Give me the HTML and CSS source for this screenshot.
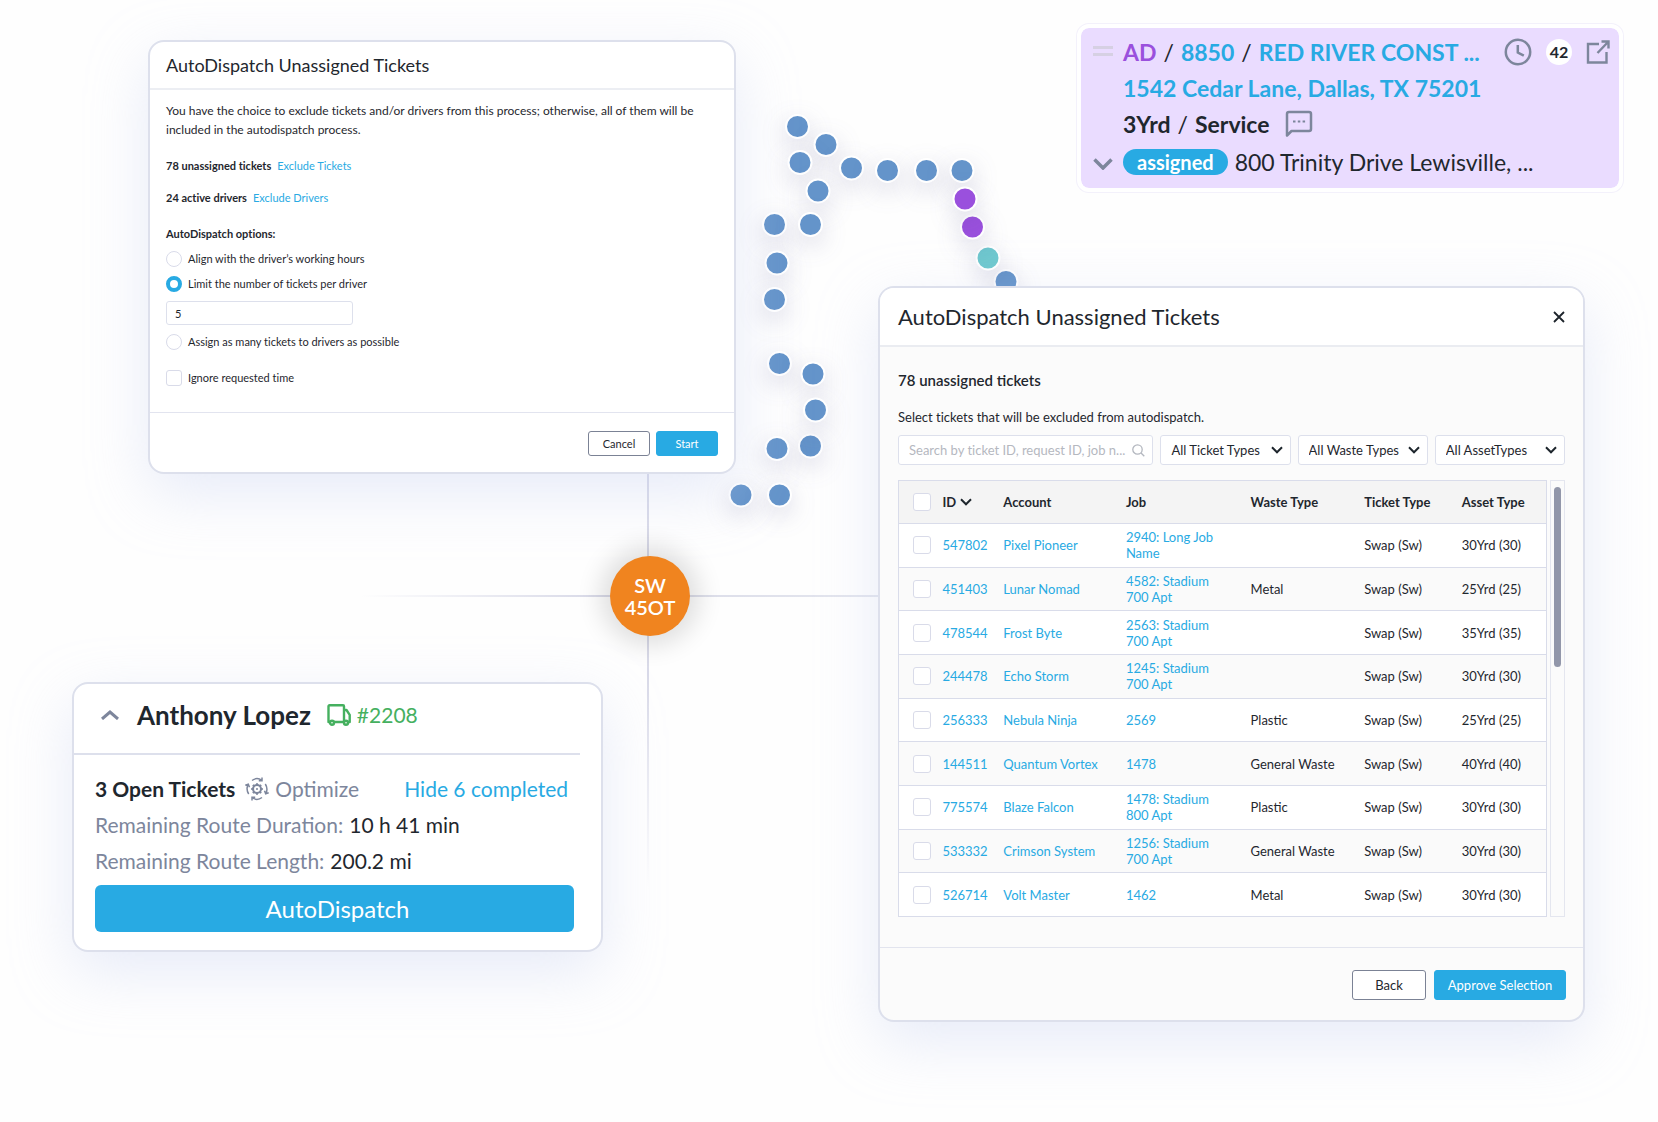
FILE: index.html
```html
<!DOCTYPE html>
<html lang="en">
<head>
<meta charset="utf-8">
<meta name="viewport" content="width=device-width, initial-scale=1">
<title>AutoDispatch</title>
<link rel="stylesheet" href="styles.css">
</head>
<body>
<main class="stage">

  <svg class="map" viewBox="0 0 1658 1122" width="1658" height="1122" aria-hidden="true">
    <defs>
      <linearGradient id="fade-x" gradientUnits="userSpaceOnUse" x1="360" y1="0" x2="878" y2="0">
        <stop offset="0" stop-color="#d9dae8" stop-opacity="0"/>
        <stop offset=".45" stop-color="#d9dae8"/>
        <stop offset="1" stop-color="#e4e6ee"/>
      </linearGradient>
      <linearGradient id="fade-y" gradientUnits="userSpaceOnUse" x1="0" y1="474" x2="0" y2="890">
        <stop offset="0" stop-color="#d9dae8"/>
        <stop offset=".5" stop-color="#d9dae8"/>
        <stop offset="1" stop-color="#d9dae8" stop-opacity="0"/>
      </linearGradient>
    </defs>
    <rect x="360" y="595" width="520" height="2" fill="url(#fade-x)"/>
    <rect x="647" y="460" width="2" height="430" fill="url(#fade-y)"/>
    <g class="stops">
      <circle cx="797.5" cy="126.5" r="11.5"/>
      <circle cx="826" cy="144.5" r="11.5"/>
      <circle cx="800" cy="162.5" r="11.5"/>
      <circle cx="851.5" cy="168" r="11.5"/>
      <circle cx="887.5" cy="170.5" r="11.5"/>
      <circle cx="926.5" cy="170.5" r="11.5"/>
      <circle cx="962" cy="170.5" r="11.5"/>
      <circle cx="818" cy="191" r="11.5"/>
      <circle cx="774.5" cy="224.5" r="11.5"/>
      <circle cx="810.5" cy="224.5" r="11.5"/>
      <circle cx="777" cy="263" r="11.5"/>
      <circle cx="774.5" cy="299.5" r="11.5"/>
      <circle cx="779.5" cy="363.5" r="11.5"/>
      <circle cx="813" cy="374" r="11.5"/>
      <circle cx="810.5" cy="446" r="11.5"/>
      <circle cx="815.5" cy="410" r="11.5"/>
      <circle cx="777" cy="448.5" r="11.5"/>
      <circle cx="741" cy="495" r="11.5"/>
      <circle cx="779.5" cy="495" r="11.5"/>
      <circle cx="1006" cy="281.5" r="11.5"/>
      <circle class="stop-teal" cx="988" cy="258" r="11.5"/>
      <circle class="stop-purple" cx="972.5" cy="227" r="11.5"/>
      <circle class="stop-purple" cx="965" cy="199" r="11.5"/>
    </g>
  </svg>

  <div class="hub"><span>SW</span><span>45OT</span></div>

  <div class="column column-left">

    <form class="card options">
      <header class="options-head"><h2>AutoDispatch Unassigned Tickets</h2></header>
      <div class="options-body">
        <p class="intro">You have the choice to exclude tickets and/or drivers from this process; otherwise, all of them will be included in the autodispatch process.</p>
        <p class="summary"><strong>78 unassigned tickets</strong><a href="#exclude-tickets">Exclude Tickets</a></p>
        <p class="summary"><strong>24 active drivers</strong><a href="#exclude-drivers">Exclude Drivers</a></p>
        <fieldset class="choices">
          <legend>AutoDispatch options:</legend>
          <label class="choice"><input type="radio" name="mode">Align with the driver’s working hours</label>
          <label class="choice"><input type="radio" name="mode" checked>Limit the number of tickets per driver</label>
          <input class="limit" type="text" value="5" aria-label="Tickets per driver">
          <label class="choice"><input type="radio" name="mode">Assign as many tickets to drivers as possible</label>
        </fieldset>
        <label class="choice choice-last"><input type="checkbox">Ignore requested time</label>
      </div>
      <footer class="options-foot">
        <button class="btn btn-small" type="button">Cancel</button>
        <button class="btn btn-small btn-primary" type="button">Start</button>
      </footer>
    </form>

    <section class="card driver">
      <header class="driver-head">
        <svg width="18" height="10" viewBox="0 0 18 10" fill="none" stroke="#7d869c" stroke-width="3"><path d="M1 9l8-7 8 7"/></svg>
        <h2>Anthony Lopez</h2>
        <span class="truck">
          <svg width="24" height="22" viewBox="0 0 24 22" fill="none" stroke="#45b05f" stroke-width="2.4" stroke-linejoin="round"><path d="M3 18H1.500V2.200a1 1 0 0 1 1-1H16a1 1 0 0 1 1 1V18H7M17 6h2.500l3.200 4.800V18h-1.200"/><circle cx="5" cy="18.800" r="2"/><circle cx="19" cy="18.800" r="2"/></svg>
          #2208
        </span>
      </header>
      <div class="driver-body">
        <div class="driver-row">
          <strong>3 Open Tickets</strong>
          <button class="optimize" type="button">
            <svg width="24" height="24" viewBox="0 0 24 24" fill="none" stroke="#7d869c"><circle cx="12" cy="12" r="4" stroke-width="2"/><circle cx="12" cy="12" r="1" fill="#7d869c" stroke="none"/><path stroke-width="2" d="M12 6.200v2M12 15.800v2M6.200 12h2M15.800 12h2M7.900 7.900l1.400 1.400M14.700 14.700l1.400 1.400M7.900 16.100l1.400-1.400M14.700 9.300l1.400-1.400"/><path stroke-width="1.500" d="M7 3.500C10 1.200 14 1.200 17 3.500M17 .5v3.200h-3.200M17 20.500c-3 2.300-7 2.300-10 0M7 23.500v-3.200h3.200M3.700 17C1.800 14 1.600 10.500 3.200 7.500M.3 8.200l3-1 1.200 3M20.300 7c1.900 3 2.100 6.500.5 9.500M23.700 15.800l-3 1-1.200-3"/></svg>
            Optimize
          </button>
          <a class="hide-link" href="#completed">Hide 6 completed</a>
        </div>
        <p class="driver-row metric">Remaining Route Duration: <b>10 h 41 min</b></p>
        <p class="driver-row metric">Remaining Route Length: <b>200.2 mi</b></p>
        <button class="dispatch" type="button">AutoDispatch</button>
      </div>
    </section>
  </div>

  <div class="column column-right">

    <article class="ticket">
      <div class="ticket-side">
        <span class="handle"></span>
        <svg width="20" height="12" viewBox="0 0 20 12" fill="none" stroke="#7d869c" stroke-width="3.500"><path d="M1.500 1.500L10 10l8.500-8.500"/></svg>
      </div>
      <div class="ticket-main">
        <div class="ticket-row"><b class="ad">AD</b><span>/</span><a href="#8850">8850</a><span>/</span><a href="#account">RED RIVER CONST ...</a>
          <span class="ticket-tools">
            <svg width="28" height="28" viewBox="0 0 28 28" fill="none" stroke="#7d869c" stroke-width="2.500"><circle cx="14" cy="14" r="12.200"/><path d="M13.800 7v7.500l6 3.200"/></svg>
            <span class="count">42</span>
            <svg width="24" height="24" viewBox="0 0 24 24" fill="none" stroke="#7d869c" stroke-width="2.400"><path d="M13 4H2v18.500h18.500V12M15.500 1.500h7v7M22.500 1.500L11.500 13"/></svg>
          </span>
        </div>
        <div class="ticket-row"><a href="#address">1542 Cedar Lane, Dallas, TX 75201</a></div>
        <div class="ticket-row"><b>3Yrd</b><span>/</span><b>Service</b>
          <svg class="chat" width="28" height="28" viewBox="0 0 28 28" fill="none" stroke="#7d869c" stroke-width="2.500" stroke-linejoin="round"><path d="M2 25.500V4a2 2 0 0 1 2-2h20a2 2 0 0 1 2 2v15a2 2 0 0 1-2 2H6.500z"/><path d="M8 11.500h2.500M12.800 11.500h2.500M17.600 11.500h2.500" stroke-width="2"/></svg>
        </div>
        <div class="ticket-row ticket-status"><span class="pill">assigned</span><span>800 Trinity Drive Lewisville, ...</span></div>
      </div>
    </article>

    <section class="card modal">
      <header class="modal-head">
        <h2>AutoDispatch Unassigned Tickets</h2>
        <button class="close" type="button" aria-label="Close"><svg width="12" height="12" viewBox="0 0 12 12" fill="none" stroke="#1d242b" stroke-width="1.800"><path d="M1 1l10 10M11 1L1 11"/></svg></button>
      </header>
      <div class="modal-body">
        <h3>78 unassigned tickets</h3>
        <p class="hint">Select tickets that will be excluded from autodispatch.</p>
        <div class="filters">
          <label class="field field-search">
            <input type="search" placeholder="Search by ticket ID, request ID, job n..." aria-label="Search tickets">
            <svg width="13" height="13" viewBox="0 0 13 13" fill="none" stroke="#b3b7bf" stroke-width="1.300"><circle cx="5.500" cy="5.500" r="4.700"/><path d="M9 9l3.300 3.300"/></svg>
          </label>
          <label class="field"><select aria-label="Ticket type"><option>All Ticket Types</option></select><svg class="caret" width="12" height="8" viewBox="0 0 12 8"><path d="M1 1.300l5 5 5-5"/></svg></label>
          <label class="field"><select aria-label="Waste type"><option>All Waste Types</option></select><svg class="caret" width="12" height="8" viewBox="0 0 12 8"><path d="M1 1.300l5 5 5-5"/></svg></label>
          <label class="field"><select aria-label="Asset type"><option>All AssetTypes</option></select><svg class="caret" width="12" height="8" viewBox="0 0 12 8"><path d="M1 1.300l5 5 5-5"/></svg></label>
        </div>
        <div class="table-wrap">
          <table class="tickets">
            <colgroup><col class="c-check"><col class="c-id"><col class="c-account"><col class="c-job"><col class="c-waste"><col class="c-ticket"><col class="c-asset"></colgroup>
            <thead>
              <tr><th class="check"><input type="checkbox" aria-label="Select all"></th><th><button class="sort" type="button">ID<svg class="caret" width="12" height="8" viewBox="0 0 12 8"><path d="M1 1.300l5 5 5-5"/></svg></button></th><th>Account</th><th>Job</th><th>Waste Type</th><th>Ticket Type</th><th>Asset Type</th></tr>
            </thead>
            <tbody>
              <tr><td class="check"><input type="checkbox" aria-label="Select 547802"></td><td><a href="#547802">547802</a></td><td><a href="#a1">Pixel Pioneer</a></td><td class="job"><a href="#j1">2940: Long Job Name</a></td><td></td><td>Swap (Sw)</td><td>30Yrd (30)</td></tr>
              <tr><td class="check"><input type="checkbox" aria-label="Select 451403"></td><td><a href="#451403">451403</a></td><td><a href="#a2">Lunar Nomad</a></td><td class="job"><a href="#j2">4582: Stadium 700 Apt</a></td><td>Metal</td><td>Swap (Sw)</td><td>25Yrd (25)</td></tr>
              <tr><td class="check"><input type="checkbox" aria-label="Select 478544"></td><td><a href="#478544">478544</a></td><td><a href="#a3">Frost Byte</a></td><td class="job"><a href="#j3">2563: Stadium 700 Apt</a></td><td></td><td>Swap (Sw)</td><td>35Yrd (35)</td></tr>
              <tr><td class="check"><input type="checkbox" aria-label="Select 244478"></td><td><a href="#244478">244478</a></td><td><a href="#a4">Echo Storm</a></td><td class="job"><a href="#j4">1245: Stadium 700 Apt</a></td><td></td><td>Swap (Sw)</td><td>30Yrd (30)</td></tr>
              <tr><td class="check"><input type="checkbox" aria-label="Select 256333"></td><td><a href="#256333">256333</a></td><td><a href="#a5">Nebula Ninja</a></td><td class="job"><a href="#j5">2569</a></td><td>Plastic</td><td>Swap (Sw)</td><td>25Yrd (25)</td></tr>
              <tr><td class="check"><input type="checkbox" aria-label="Select 144511"></td><td><a href="#144511">144511</a></td><td><a href="#a6">Quantum Vortex</a></td><td class="job"><a href="#j6">1478</a></td><td>General Waste</td><td>Swap (Sw)</td><td>40Yrd (40)</td></tr>
              <tr><td class="check"><input type="checkbox" aria-label="Select 775574"></td><td><a href="#775574">775574</a></td><td><a href="#a7">Blaze Falcon</a></td><td class="job"><a href="#j7">1478: Stadium 800 Apt</a></td><td>Plastic</td><td>Swap (Sw)</td><td>30Yrd (30)</td></tr>
              <tr><td class="check"><input type="checkbox" aria-label="Select 533332"></td><td><a href="#533332">533332</a></td><td><a href="#a8">Crimson System</a></td><td class="job"><a href="#j8">1256: Stadium 700 Apt</a></td><td>General Waste</td><td>Swap (Sw)</td><td>30Yrd (30)</td></tr>
              <tr><td class="check"><input type="checkbox" aria-label="Select 526714"></td><td><a href="#526714">526714</a></td><td><a href="#a9">Volt Master</a></td><td class="job"><a href="#j9">1462</a></td><td>Metal</td><td>Swap (Sw)</td><td>30Yrd (30)</td></tr>
            </tbody>
          </table>
          <div class="track"><div class="thumb"></div></div>
        </div>
      </div>
      <footer class="modal-foot">
        <button class="btn btn-back" type="button">Back</button>
        <button class="btn btn-primary btn-approve" type="button">Approve Selection</button>
      </footer>
    </section>
  </div>
</main>
</body>
</html>
```
FILE: styles.css
```css
:root {
  --ink: #1f272e;
  --blue: #28aae3;
  --slate: #7d869c;
  --line: #dde0ec;
}

* { box-sizing: border-box; }

body {
  margin: 0;
  background: #fefefe;
  color: var(--ink);
  font-family: Lato, "Liberation Sans", sans-serif;
  font-size: 13px;
}

h2, h3, p { margin: 0; font-weight: 400; }
a { color: var(--blue); text-decoration: none; }
button, input, select { font: inherit; color: inherit; margin: 0; }
button { padding: 0; border: 0; background: none; cursor: pointer; }
svg { flex: none; display: block; }

.stage {
  position: relative;
  display: grid;
  grid-template-columns: 664fr 745fr;
  gap: 142px;
  min-height: 100vh;
  padding: 24px 35px 48px 72px;
  overflow: hidden;
}

.column {
  display: flex;
  flex-direction: column;
  min-width: 0;
  position: relative;
}

/* route map drawn behind the cards */
.map { position: absolute; left: 0; top: 0; }
.stops circle {
  fill: #6494ca;
  stroke: #fff;
  stroke-width: 2px;
  filter: drop-shadow(0 8px 12px rgba(70, 70, 130, .2));
}
.stops .stop-purple { fill: #9a50dd; }
.stops .stop-teal { fill: #6fc9cf; }

.hub {
  position: absolute;
  left: 610px;
  top: 556px;
  z-index: 1;
  width: 80px;
  height: 80px;
  display: flex;
  flex-direction: column;
  align-items: center;
  justify-content: center;
  border-radius: 50%;
  background: #f0841f;
  color: #fff;
  font-size: 20px;
  font-weight: 600;
  line-height: 22px;
  box-shadow: 0 0 24px 10px rgba(0, 0, 0, .12);
}

.card {
  background: #fff;
  border: 2px solid var(--line);
  border-radius: 16px;
  box-shadow: 0 20px 60px rgba(190, 202, 238, .36);
  overflow: hidden;
}

/* buttons */
.btn {
  height: 30px;
  border: 1px solid #7b8295;
  border-radius: 3px;
  background: #fff;
  font-size: 13px;
}
.btn-small { width: 62px; height: 25px; font-size: 11px; }
.btn-primary { border-color: var(--blue); background: var(--blue); color: #fff; }
.btn-back { width: 74px; }
.btn-approve { width: 132px; }

/* check boxes and radios */
input[type="checkbox"], input[type="radio"] {
  appearance: none;
  flex: none;
  width: 16px;
  height: 16px;
  border: 1px solid #d9dbe9;
  border-radius: 3px;
  background: #fff;
}
input[type="radio"] { border-radius: 50%; }
input[type="radio"]:checked { border: 4px solid var(--blue); }

/* dispatch options */
.column-left { padding-top: 16px; gap: 208px; }
.options { margin-left: 76px; font-size: 11px; font-variant-ligatures: none; }
.options-head { padding: 0 16px; border-bottom: 2px solid #eceef3; }
.options-head h2 { font-size: 18px; line-height: 46px; }
.options-body {
  display: flex;
  flex-direction: column;
  padding: 11px 16px 26px;
  line-height: 16px;
}
.intro { margin-bottom: 3px; font-size: 12px; line-height: 19px; }
.summary { display: flex; gap: 6px; margin-top: 16px; }
.choices {
  display: flex;
  flex-direction: column;
  gap: 9px;
  min-width: 0;
  margin: 20px 0 0;
  padding: 0;
  border: 0;
}
.choices legend { padding: 0; margin-bottom: 9px; font-weight: 700; }
.choice { display: flex; align-items: center; gap: 6px; }
.choice-last { margin-top: 20px; }
.limit {
  width: 187px;
  height: 24px;
  padding: 0 8px;
  border: 1px solid var(--line);
  border-radius: 3px;
  background: #fff;
}
.options-foot {
  display: flex;
  justify-content: flex-end;
  gap: 6px;
  padding: 18px 16px 16px;
  border-top: 1px solid #e2e4ef;
}

/* driver card */
.driver { margin-right: 133px; }
.driver-head {
  display: flex;
  align-items: center;
  margin-right: 21px;
  padding: 13px 0 20px 27px;
  border-bottom: 2px solid var(--line);
  line-height: 36px;
}
.driver-head h2 { margin: 0 16px 0 18px; font-size: 26px; font-weight: 700; }
.truck { display: flex; align-items: center; gap: 6px; color: #45b05f; font-size: 21px; }
.driver-body { padding: 16px 27px 18px 21px; font-size: 21px; }
.driver-row { display: flex; align-items: center; line-height: 36px; }
.optimize { display: flex; align-items: center; gap: 6px; margin-left: 10px; color: var(--slate); }
.hide-link { margin: 0 6px 0 auto; }
.metric { gap: 6px; color: var(--slate); }
.metric b { color: var(--ink); font-weight: 400; }
.dispatch {
  width: 100%;
  height: 47px;
  margin-top: 6px;
  padding-left: 6px;
  border-radius: 6px;
  background: var(--blue);
  color: #fff;
  font-size: 24px;
}

/* ticket */
.ticket {
  display: flex;
  margin-left: 199px;
  padding: 6px 9px 6px 12px;
  border: 4px solid #fff;
  border-radius: 12px;
  background: #eadcff;
  background-clip: padding-box;
  box-shadow: 0 0 0 1px #f3f1fb;
  font-size: 23px;
}
.ticket-side {
  display: flex;
  flex-direction: column;
  justify-content: space-between;
  padding: 12px 10px 12px 0;
}
.handle { width: 20px; height: 10px; border: solid #d6d0e3; border-width: 3px 0; }
.ticket-main { flex: 1; min-width: 0; }
.ticket-row { display: flex; align-items: center; gap: 7px; height: 36px; white-space: nowrap; }
.ticket-status { height: 40px; }
.ticket-row a { font-weight: 700; }
.ad { color: #9a50dd; }
.ticket-tools { display: flex; align-items: center; gap: 14px; margin-left: auto; }
.count {
  width: 26px;
  border-radius: 50%;
  background: #fff;
  font-size: 16px;
  font-weight: 700;
  line-height: 26px;
  text-align: center;
}
.chat { margin-left: 8px; }
.pill {
  padding: 0 14px;
  border-radius: 13px;
  background: var(--blue);
  color: #fff;
  font-size: 20px;
  font-weight: 700;
  line-height: 26px;
}

/* ticket selection */
.column-right { gap: 94px; }
.modal { margin-right: 38px; background: #fbfbfb; }
.modal-head {
  display: flex;
  align-items: center;
  justify-content: space-between;
  padding: 0 18px;
  border-bottom: 2px solid #eaecf1;
  background: #fff;
}
.modal-head h2 { font-size: 22px; line-height: 57px; }
.modal-body { padding: 23px 18px 30px; }
.modal-body h3 { font-size: 15px; font-weight: 600; line-height: 20px; }
.hint { margin-top: 18px; line-height: 18px; }
.filters {
  display: grid;
  grid-template-columns: 255fr 130fr 130fr 130fr;
  gap: 7px;
  margin-top: 9px;
}
.hint, .field { font-variant-ligatures: none; }
.field { display: grid; align-items: center; min-width: 0; }
.field > * { grid-area: 1 / 1; }
.field input, .field select {
  appearance: none;
  width: 100%;
  height: 30px;
  padding: 0 10px;
  border: 1px solid var(--line);
  border-radius: 3px;
  background: #fff;
}
.field input::placeholder { color: #b5b8bf; opacity: 1; }
.field svg { justify-self: end; margin-right: 8px; pointer-events: none; }
.caret { fill: none; stroke: var(--ink); stroke-width: 2; }

.table-wrap { display: flex; gap: 3px; margin-top: 15px; }
.tickets {
  flex: 1;
  height: 437px;
  table-layout: fixed;
  border-collapse: collapse;
  border: 1px solid #d9dcea;
  line-height: 16px;
}
.c-check { width: 44px; }
.c-id { width: 61px; }
.c-account { width: 123px; }
.c-job { width: 125px; }
.c-waste { width: 114px; }
.c-ticket { width: 98px; }
.c-asset { width: 85px; }
.tickets tr { height: 43px; border-bottom: 1px solid #d9dcea; background: #fff; }
.tickets tbody tr:nth-child(even) { background: #fafafa; }
.tickets thead tr { background: #f4f4f4; }
.tickets th, .tickets td { padding: 0; text-align: left; vertical-align: middle; }
.tickets .job { padding-right: 25px; }
.tickets .check { padding-left: 14px; }
.check input { display: block; width: 18px; height: 18px; }
.sort { display: flex; align-items: center; gap: 4px; font-weight: 700; }
.track { width: 15px; padding: 6px 3px; border: 1px solid #e4e6ef; }
.thumb { height: 180px; border-radius: 4px; background: #9297aa; }
.modal-foot {
  display: flex;
  justify-content: flex-end;
  gap: 8px;
  padding: 22px 17px 20px;
  border-top: 1px solid #e2e4ee;
}
```
